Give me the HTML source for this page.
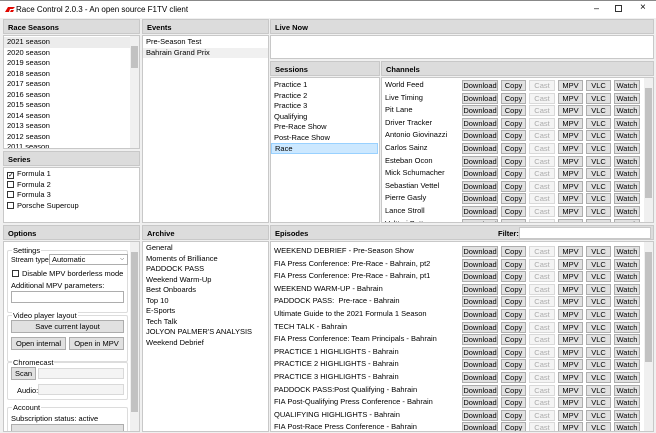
<!DOCTYPE html>
<html><head><style>
*{box-sizing:border-box;margin:0;padding:0}
body{width:656px;height:433px;background:#f0f0f0;font-family:"Liberation Sans",sans-serif;font-size:7.5px;color:#000;position:relative;overflow:hidden}
.a{position:absolute}
.title{left:0;top:0;width:656px;height:18px;background:#fff;border-top:1px solid #888}
.hd{position:absolute;background:#dcdcdc;border:1px solid #c8c8c8;font-weight:bold;font-size:7.5px;padding:3px 4px;height:15px}
.bx{position:absolute;background:#fff;border:1px solid #c8c8c8}
.li{height:10.5px;line-height:10.5px;padding-left:3px;white-space:nowrap}
.sb{position:absolute;background:#f0f0f0;width:9px}
.th{position:absolute;background:#c2c2c2;left:1px;width:7px}
.row{position:absolute;left:0;height:12px;width:100%}
.row .n{position:absolute;left:3px;top:0;line-height:9px;white-space:nowrap}
.bt{position:absolute;top:0;display:flex;gap:3px}
.bt span,.btn{display:block;height:11px;background:#e1e1e1;border:1px solid #adadad;text-align:center;line-height:9px;font-size:7.5px}
.bt span:nth-child(1){width:36px}.bt span:nth-child(2){width:25px}.bt span:nth-child(3){width:26px;background:#f4f4f4;border-color:#d9d9d9;color:#aaa}.bt span:nth-child(4){width:25px}.bt span:nth-child(5){width:25px}.bt span:nth-child(6){width:26px}
.grp{position:absolute;border:1px solid #dcdcdc;border-radius:2px}
.lg{position:absolute;top:-5px;left:4px;background:#fff;padding:0 1px}
.cmb{position:absolute;background:#fff;border:1px solid #adadad;height:11px;padding-left:2px;line-height:9px}
.cmb.d{background:#f4f4f4;border-color:#d9d9d9}
.cb{display:inline-block;width:7px;height:7px;border:1px solid #333;background:#fff;vertical-align:-1px;margin-right:3px}
</style></head><body>
<div class="a title">
<svg class="a" style="left:5px;top:6px" width="10" height="5"><path d="M0 5 L3 0 H10 L8 2 H5 L4 5Z M5 5 L6 3 H9 L8 5Z" fill="#e10600"/></svg>
<span class="a" style="left:16px;top:4px;font-size:8px">Race Control 2.0.3 - An open source F1TV client</span>
<span class="a" style="left:594px;top:2px;font-size:9px">–</span>
<span class="a" style="left:615px;top:4px;width:7px;height:7px;border:1px solid #333"></span>
<span class="a" style="left:640px;top:1px;font-size:10px">×</span>
</div>

<div class="hd" style="left:3px;top:19px;width:137px">Race Seasons</div>
<div class="hd" style="left:142px;top:19px;width:127px">Events</div>
<div class="hd" style="left:270px;top:19px;width:384px">Live Now</div>

<div class="bx" style="left:3px;top:35px;width:137px;height:114px;overflow:hidden;padding-top:1px">
<div class="li" style="background:#ececec;width:126px">2021 season</div><div class="li">2020 season</div><div class="li">2019 season</div><div class="li">2018 season</div><div class="li">2017 season</div><div class="li">2016 season</div><div class="li">2015 season</div><div class="li">2014 season</div><div class="li">2013 season</div><div class="li">2012 season</div><div class="li">2011 season</div>
<div class="sb" style="left:126px;top:0;height:112px"><div class="th" style="top:10px;height:22px"></div></div>
</div>
<div class="hd" style="left:3px;top:151px;width:137px">Series</div>
<div class="bx" style="left:3px;top:167px;width:137px;height:56px;padding-top:1px">
<div class="li"><span class="cb" style="text-align:center;line-height:5px;font-size:7px">✓</span>Formula 1</div>
<div class="li"><span class="cb"></span>Formula 2</div>
<div class="li"><span class="cb"></span>Formula 3</div>
<div class="li"><span class="cb"></span>Porsche Supercup</div>
</div>

<div class="bx" style="left:142px;top:35px;width:127px;height:188px;padding-top:1px">
<div class="li">Pre-Season Test</div><div class="li" style="background:#f0f0f0">Bahrain Grand Prix</div>
</div>

<div class="bx" style="left:270px;top:35px;width:384px;height:24px"></div>
<div class="hd" style="left:270px;top:61px;width:110px">Sessions</div>
<div class="hd" style="left:381px;top:61px;width:273px">Channels</div>
<div class="bx" style="left:270px;top:77px;width:110px;height:146px;padding-top:2px">
<div class="li">Practice 1</div><div class="li">Practice 2</div><div class="li">Practice 3</div><div class="li">Qualifying</div><div class="li">Pre-Race Show</div><div class="li">Post-Race Show</div><div class="li" style="background:#cce8ff;border:1px solid #99d1ff;width:107px;line-height:9px">Race</div>
</div>
<div class="bx" style="left:381px;top:77px;width:273px;height:146px;overflow:hidden">
<div class="sb" style="left:262px;top:0;height:144px"><div class="th" style="top:10px;height:110px"></div></div>
<div class="row" style="top:2px"><span class="n">World Feed</span><div class="bt" style="left:80px"><span>Download</span><span>Copy</span><span>Cast</span><span>MPV</span><span>VLC</span><span>Watch</span></div></div>
<div class="row" style="top:14.6px"><span class="n">Live Timing</span><div class="bt" style="left:80px"><span>Download</span><span>Copy</span><span>Cast</span><span>MPV</span><span>VLC</span><span>Watch</span></div></div>
<div class="row" style="top:27.2px"><span class="n">Pit Lane</span><div class="bt" style="left:80px"><span>Download</span><span>Copy</span><span>Cast</span><span>MPV</span><span>VLC</span><span>Watch</span></div></div>
<div class="row" style="top:39.8px"><span class="n">Driver Tracker</span><div class="bt" style="left:80px"><span>Download</span><span>Copy</span><span>Cast</span><span>MPV</span><span>VLC</span><span>Watch</span></div></div>
<div class="row" style="top:52.4px"><span class="n">Antonio Giovinazzi</span><div class="bt" style="left:80px"><span>Download</span><span>Copy</span><span>Cast</span><span>MPV</span><span>VLC</span><span>Watch</span></div></div>
<div class="row" style="top:65px"><span class="n">Carlos Sainz</span><div class="bt" style="left:80px"><span>Download</span><span>Copy</span><span>Cast</span><span>MPV</span><span>VLC</span><span>Watch</span></div></div>
<div class="row" style="top:77.6px"><span class="n">Esteban Ocon</span><div class="bt" style="left:80px"><span>Download</span><span>Copy</span><span>Cast</span><span>MPV</span><span>VLC</span><span>Watch</span></div></div>
<div class="row" style="top:90.2px"><span class="n">Mick Schumacher</span><div class="bt" style="left:80px"><span>Download</span><span>Copy</span><span>Cast</span><span>MPV</span><span>VLC</span><span>Watch</span></div></div>
<div class="row" style="top:102.8px"><span class="n">Sebastian Vettel</span><div class="bt" style="left:80px"><span>Download</span><span>Copy</span><span>Cast</span><span>MPV</span><span>VLC</span><span>Watch</span></div></div>
<div class="row" style="top:115.4px"><span class="n">Pierre Gasly</span><div class="bt" style="left:80px"><span>Download</span><span>Copy</span><span>Cast</span><span>MPV</span><span>VLC</span><span>Watch</span></div></div>
<div class="row" style="top:128px"><span class="n">Lance Stroll</span><div class="bt" style="left:80px"><span>Download</span><span>Copy</span><span>Cast</span><span>MPV</span><span>VLC</span><span>Watch</span></div></div>
<div class="row" style="top:140.6px"><span class="n">Valtteri Bottas</span><div class="bt" style="left:80px"><span>Download</span><span>Copy</span><span>Cast</span><span>MPV</span><span>VLC</span><span>Watch</span></div></div>
</div>

<div class="hd" style="left:3px;top:225px;width:137px">Options</div>
<div class="hd" style="left:142px;top:225px;width:127px">Archive</div>
<div class="hd" style="left:270px;top:225px;width:384px">Episodes</div>
<span class="a" style="left:498px;top:229px;font-weight:bold">Filter:</span>
<div class="a" style="left:519px;top:227px;width:132px;height:12px;background:#fff;border:1px solid #c8c8c8"></div>

<div class="bx" style="left:3px;top:241px;width:137px;height:191px;overflow:hidden">
<div class="sb" style="left:126px;top:0;height:189px"><div class="th" style="top:10px;height:160px"></div></div>
<div class="grp" style="left:3px;top:8px;width:121px;height:63px"><span class="lg">Settings</span></div>
<span class="a" style="left:7px;top:15px;font-size:7px">Stream type:</span>
<div class="cmb" style="left:45px;top:12px;width:79px">Automatic<span style="position:absolute;right:3px;font-size:5px">⌵</span></div>
<span class="a" style="left:8px;top:27px"><span class="cb"></span>Disable MPV borderless mode</span>
<span class="a" style="left:7px;top:39px">Additional MPV parameters:</span>
<div class="a" style="left:7px;top:49px;width:113px;height:12px;border:1px solid #adadad;background:#fff"></div>
<div class="grp" style="left:3px;top:73px;width:121px;height:47px"><span class="lg">Video player layout</span></div>
<div class="btn a" style="left:7px;top:78px;width:113px;height:13px;line-height:11px">Save current layout</div>
<div class="btn a" style="left:7px;top:95px;width:55px;height:13px;line-height:11px">Open internal</div>
<div class="btn a" style="left:65px;top:95px;width:55px;height:13px;line-height:11px">Open in MPV</div>
<div class="grp" style="left:3px;top:120px;width:121px;height:38px"><span class="lg">Chromecast</span></div>
<div class="btn a" style="left:7px;top:125px;width:25px;height:13px;line-height:11px">Scan</div>
<div class="cmb d" style="left:34px;top:126px;width:86px"></div>
<span class="a" style="left:13px;top:144px">Audio:</span>
<div class="cmb d" style="left:34px;top:142px;width:86px"></div>
<div class="grp" style="left:3px;top:165px;width:121px;height:40px"><span class="lg">Account</span></div>
<span class="a" style="left:7px;top:172px">Subscription status: active</span>
<div class="btn a" style="left:7px;top:182px;width:113px;height:12px"></div>
</div>

<div class="bx" style="left:142px;top:241px;width:127px;height:191px;padding-top:1px">
<div class="li">General</div><div class="li">Moments of Brilliance</div><div class="li">PADDOCK PASS</div><div class="li">Weekend Warm-Up</div><div class="li">Best Onboards</div><div class="li">Top 10</div><div class="li">E-Sports</div><div class="li">Tech Talk</div><div class="li">JOLYON PALMER'S ANALYSIS</div><div class="li">Weekend Debrief</div>
</div>

<div class="bx" style="left:270px;top:241px;width:384px;height:191px;overflow:hidden">
<div class="sb" style="left:373px;top:0;height:189px"><div class="th" style="top:10px;height:110px"></div></div>
<div class="row" style="top:4px"><span class="n">WEEKEND DEBRIEF - Pre-Season Show</span><div class="bt" style="left:191px"><span>Download</span><span>Copy</span><span>Cast</span><span>MPV</span><span>VLC</span><span>Watch</span></div></div>
<div class="row" style="top:16.6px"><span class="n">FIA Press Conference: Pre-Race - Bahrain, pt2</span><div class="bt" style="left:191px"><span>Download</span><span>Copy</span><span>Cast</span><span>MPV</span><span>VLC</span><span>Watch</span></div></div>
<div class="row" style="top:29.2px"><span class="n">FIA Press Conference: Pre-Race - Bahrain, pt1</span><div class="bt" style="left:191px"><span>Download</span><span>Copy</span><span>Cast</span><span>MPV</span><span>VLC</span><span>Watch</span></div></div>
<div class="row" style="top:41.8px"><span class="n">WEEKEND WARM-UP - Bahrain</span><div class="bt" style="left:191px"><span>Download</span><span>Copy</span><span>Cast</span><span>MPV</span><span>VLC</span><span>Watch</span></div></div>
<div class="row" style="top:54.4px"><span class="n">PADDOCK PASS:&nbsp; Pre-race - Bahrain</span><div class="bt" style="left:191px"><span>Download</span><span>Copy</span><span>Cast</span><span>MPV</span><span>VLC</span><span>Watch</span></div></div>
<div class="row" style="top:67px"><span class="n">Ultimate Guide to the 2021 Formula 1 Season</span><div class="bt" style="left:191px"><span>Download</span><span>Copy</span><span>Cast</span><span>MPV</span><span>VLC</span><span>Watch</span></div></div>
<div class="row" style="top:79.6px"><span class="n">TECH TALK - Bahrain</span><div class="bt" style="left:191px"><span>Download</span><span>Copy</span><span>Cast</span><span>MPV</span><span>VLC</span><span>Watch</span></div></div>
<div class="row" style="top:92.2px"><span class="n">FIA Press Conference: Team Principals - Bahrain</span><div class="bt" style="left:191px"><span>Download</span><span>Copy</span><span>Cast</span><span>MPV</span><span>VLC</span><span>Watch</span></div></div>
<div class="row" style="top:104.8px"><span class="n">PRACTICE 1 HIGHLIGHTS - Bahrain</span><div class="bt" style="left:191px"><span>Download</span><span>Copy</span><span>Cast</span><span>MPV</span><span>VLC</span><span>Watch</span></div></div>
<div class="row" style="top:117.4px"><span class="n">PRACTICE 2 HIGHLIGHTS - Bahrain</span><div class="bt" style="left:191px"><span>Download</span><span>Copy</span><span>Cast</span><span>MPV</span><span>VLC</span><span>Watch</span></div></div>
<div class="row" style="top:130px"><span class="n">PRACTICE 3 HIGHLIGHTS - Bahrain</span><div class="bt" style="left:191px"><span>Download</span><span>Copy</span><span>Cast</span><span>MPV</span><span>VLC</span><span>Watch</span></div></div>
<div class="row" style="top:142.6px"><span class="n">PADDOCK PASS:Post Qualifying - Bahrain</span><div class="bt" style="left:191px"><span>Download</span><span>Copy</span><span>Cast</span><span>MPV</span><span>VLC</span><span>Watch</span></div></div>
<div class="row" style="top:155.2px"><span class="n">FIA Post-Qualifying Press Conference - Bahrain</span><div class="bt" style="left:191px"><span>Download</span><span>Copy</span><span>Cast</span><span>MPV</span><span>VLC</span><span>Watch</span></div></div>
<div class="row" style="top:167.8px"><span class="n">QUALIFYING HIGHLIGHTS - Bahrain</span><div class="bt" style="left:191px"><span>Download</span><span>Copy</span><span>Cast</span><span>MPV</span><span>VLC</span><span>Watch</span></div></div>
<div class="row" style="top:180.4px"><span class="n">FIA Post-Race Press Conference - Bahrain</span><div class="bt" style="left:191px"><span>Download</span><span>Copy</span><span>Cast</span><span>MPV</span><span>VLC</span><span>Watch</span></div></div>
</div>
</body></html>
